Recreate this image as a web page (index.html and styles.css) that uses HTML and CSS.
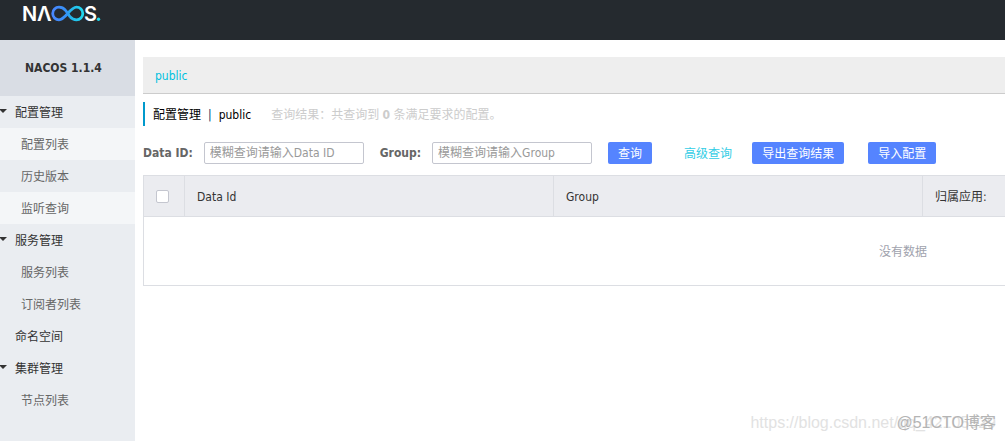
FILE: index.html
```html
<!DOCTYPE html>
<html lang="zh-CN">
<head>
<meta charset="utf-8">
<title>NACOS</title>
<link rel="stylesheet" href="styles.css">
</head>
<body>
<header class="topbar">
  <a class="logo" href="#" aria-label="NACOS">
    <svg width="80" height="24" viewBox="0 0 80 24">
      <defs>
        <linearGradient id="loop" gradientUnits="userSpaceOnUse" x1="29" y1="0" x2="61" y2="0">
          <stop offset="0" stop-color="#4a86ff"/>
          <stop offset="0.45" stop-color="#3592f5"/>
          <stop offset="0.6" stop-color="#25b5ea"/>
          <stop offset="1" stop-color="#1fdcf0"/>
        </linearGradient>
      </defs>
      <text class="logo-text" x="-1" y="19">N</text>
      <text class="logo-text" x="14" y="19">Λ</text>
      <path d="M42.500 8.200C40.500 6 38.500 5.200 36 5.200A6.300 6.300 0 0 0 36 17.800C42.500 17.800 47 5.200 53.500 5.200A6.300 6.300 0 0 1 53.500 17.800C51 17.800 49 17 47 14.800M42.500 8.200L47 14.800" fill="none" stroke="url(#loop)" stroke-width="2.800"/>
      <text class="logo-text" x="61" y="19">S</text>
      <circle cx="75.500" cy="17.300" r="1.700" fill="#1fdcf0"/>
    </svg>
  </a>
</header>
<div class="layout">
  <nav class="sidebar">
    <h1 class="version">NACOS 1.1.4</h1>
    <ul class="menu">
      <li><a class="item group" href="#">配置管理</a></li>
      <li><a class="item sub light" href="#">配置列表</a></li>
      <li><a class="item sub" href="#">历史版本</a></li>
      <li><a class="item sub light" href="#">监听查询</a></li>
      <li><a class="item group" href="#">服务管理</a></li>
      <li><a class="item sub" href="#">服务列表</a></li>
      <li><a class="item sub" href="#">订阅者列表</a></li>
      <li><a class="item" href="#">命名空间</a></li>
      <li><a class="item group" href="#">集群管理</a></li>
      <li><a class="item sub" href="#">节点列表</a></li>
    </ul>
  </nav>
  <main class="content">
    <div class="namespaces"><a href="#">public</a></div>
    <div class="heading">
      <h2>配置管理<span class="bar">|</span>public</h2>
      <p>查询结果：共查询到 <strong>0</strong> 条满足要求的配置。</p>
    </div>
    <form class="search">
      <label for="data-id">Data ID:</label>
      <input class="field" id="data-id" type="text" placeholder="模糊查询请输入Data ID">
      <label for="group">Group:</label>
      <input class="field" id="group" type="text" placeholder="模糊查询请输入Group">
      <button class="btn" type="button">查询</button>
      <a class="advanced" href="#">高级查询</a>
      <button class="btn export" type="button">导出查询结果</button>
      <button class="btn" type="button">导入配置</button>
    </form>
    <div class="table-wrap">
      <table>
        <thead>
          <tr>
            <th class="check"><input type="checkbox" aria-label="全选"></th>
            <th class="col">Data Id</th>
            <th class="col">Group</th>
            <th>归属应用:</th>
          </tr>
        </thead>
        <tbody>
          <tr><td class="empty" colspan="4">没有数据</td></tr>
        </tbody>
      </table>
    </div>
  </main>
</div>
<div class="watermark">
  <span class="wm-url">https://blog.csdn.net/qq_42105629</span>
  <span class="wm-name">@51CTO博客</span>
</div>
</body>
</html>
```
FILE: styles.css
```css
* { box-sizing: border-box; }
body {
  margin: 0;
  min-height: 100vh;
  display: flex;
  flex-direction: column;
  background: #fff;
  color: #333;
  font: 12px/16px "DejaVu Sans Condensed", "Noto Sans CJK SC", sans-serif;
}
a { text-decoration: none; }
h1, h2, p, ul { margin: 0; padding: 0; font-size: inherit; }
ul { list-style: none; }
.topbar { height: 40px; padding: 2px 23px; background: #252a2f; }
.logo { display: inline-block; }
.logo svg { display: block; overflow: visible; }
.logo-text { font: 600 20px/20px Inter, sans-serif; fill: #fff; }
.layout { flex: 1; display: flex; }
.sidebar { flex: none; width: 135px; background: #eaedf1; }
.version {
  height: 56px;
  padding-left: 25px;
  background: #d9dde4;
  line-height: 56px;
  font-weight: 700;
}
.item {
  display: block;
  position: relative;
  padding: 2px 0 0 15px;
  line-height: 30px;
  color: #333;
}
.group::before {
  content: "";
  position: absolute;
  left: -1px;
  top: 13px;
  border: 4px solid transparent;
  border-top-color: #333;
  border-bottom: 0;
}
.sub { padding-left: 21px; color: #666; }
.light { background: #f4f6f8; }
.content { flex: 1; min-width: 0; padding: 17px 0 0 8px; overflow: hidden; }
.namespaces {
  padding: 2px 12px 0;
  background: #eee;
  border-bottom: 1px solid #ccc;
  line-height: 34px;
}
.namespaces a { color: #00c1de; }
.heading {
  display: flex;
  gap: 20px;
  margin-top: 8px;
  padding: 2px 0 0 8px;
  border-left: 2px solid #09c;
  line-height: 22px;
  white-space: nowrap;
}
.heading h2 { color: #000; font-weight: 400; }
.heading p { color: #ccc; }
.bar { margin: 0 7px; color: #036; }
.search {
  display: flex;
  align-items: center;
  margin-top: 16px;
  white-space: nowrap;
}
.search label { margin-right: 11px; color: #666; font-weight: 700; }
.field {
  width: 160px;
  height: 22px;
  margin-right: 16px;
  padding: 0 5px;
  border: 1px solid #c4c6cf;
  border-radius: 2px;
  background: #fff;
  font: inherit;
}
.field::placeholder { color: #999; }
.btn {
  height: 22px;
  padding: 2px 10px 0;
  border: 0;
  border-radius: 2px;
  background: #5584ff;
  color: #fff;
  font: inherit;
}
.advanced { margin: 0 20px 0 32px; padding-top: 2px; color: #33cde5; }
.export { margin-right: 24px; }
.table-wrap { margin-top: 11px; overflow: hidden; }
table {
  width: 1520px;
  table-layout: fixed;
  border-collapse: collapse;
  border: 1px solid #dcdee3;
}
th {
  height: 41px;
  padding: 2px 12px 0;
  border: 1px solid #dcdee3;
  background: #ebecf0;
  font-weight: 400;
  text-align: left;
}
.check { width: 41px; padding-top: 0; }
.col { width: 369px; }
.check input {
  appearance: none;
  display: block;
  width: 13px;
  height: 13px;
  margin: 0;
  border: 1px solid #c4c6cf;
  border-radius: 2px;
  background: #fff;
}
.empty { height: 69px; padding: 2px 0 0; color: #a0a2ad; text-align: center; }
.watermark {
  position: absolute;
  right: 9px;
  bottom: 8px;
  display: grid;
  justify-items: end;
  align-items: center;
  line-height: 20px;
  white-space: nowrap;
  pointer-events: none;
}
.watermark span { grid-area: 1 / 1; }
.wm-url { color: #e2e2e2; font-family: "Liberation Sans", sans-serif; font-size: 16px; }
.wm-name { color: #b4b4b4; font-family: "Liberation Sans", "Noto Sans CJK SC", sans-serif; font-size: 16px; }
```
